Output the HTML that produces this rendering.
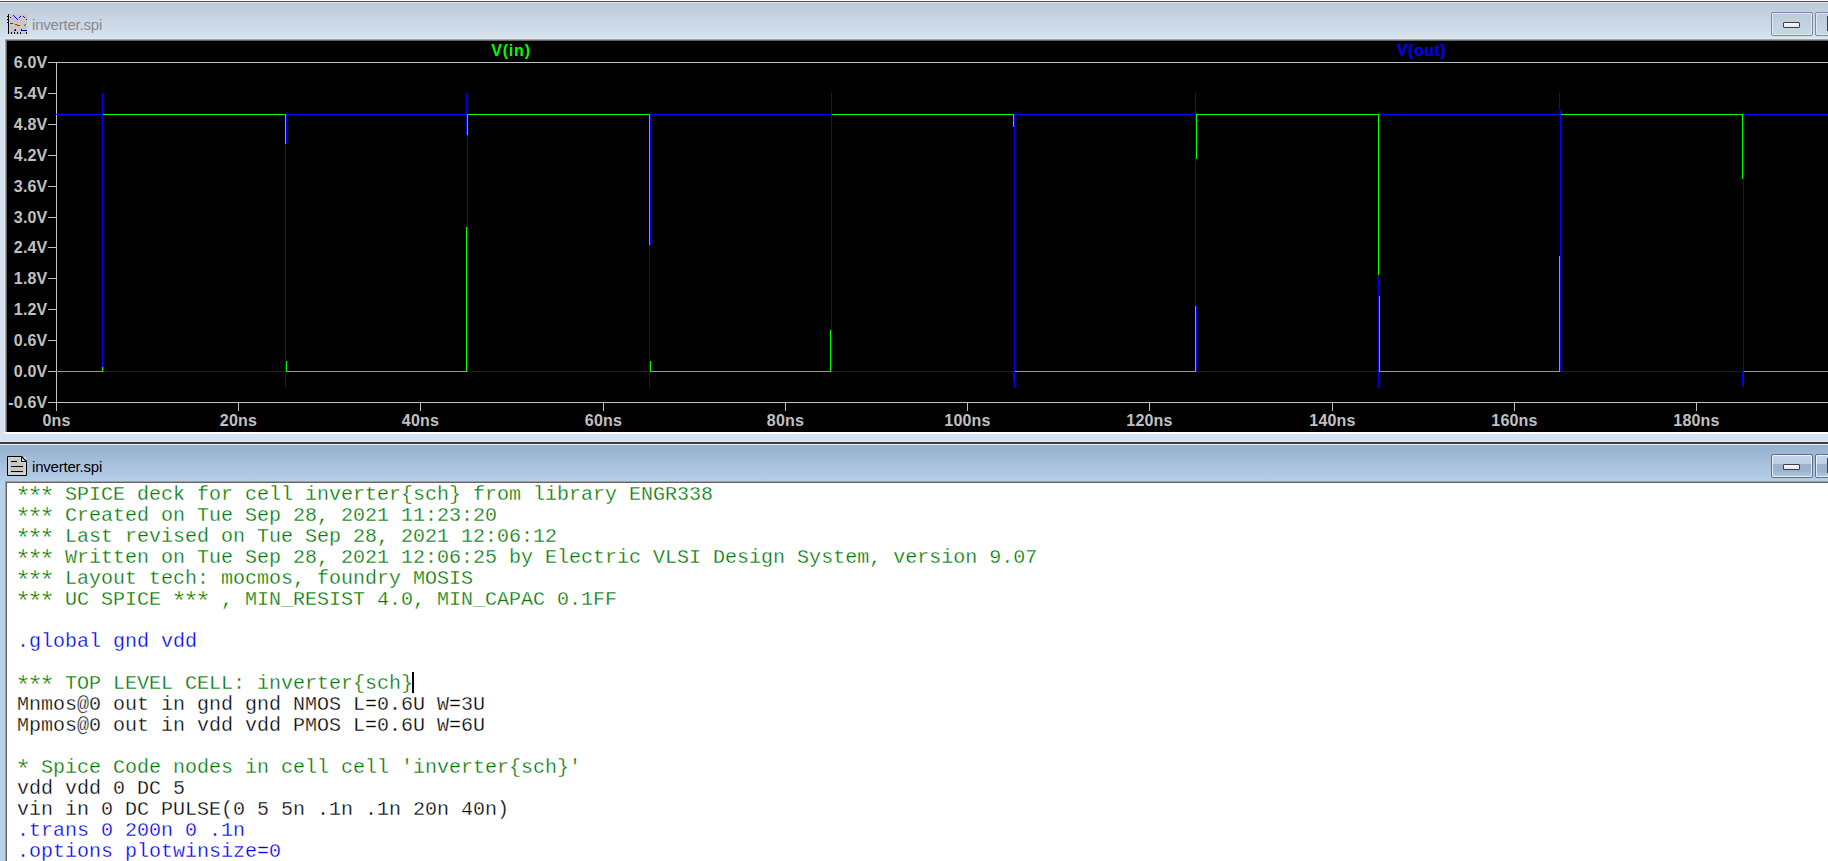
<!DOCTYPE html>
<html><head><meta charset="utf-8"><style>
html,body{margin:0;padding:0;}
body{width:1828px;height:861px;position:relative;overflow:hidden;background:#d6e3ef;font-family:"Liberation Sans",sans-serif;}
.abs{position:absolute;box-sizing:content-box;}
#net{position:absolute;left:17px;top:484px;font-family:"Liberation Mono",monospace;font-size:20px;line-height:21px;white-space:pre;-webkit-text-stroke:0.3px #fff;paint-order:normal;}
.ast{display:inline-block;width:12px;text-align:center;transform:translateY(3px) scale(1.3);}
</style></head><body>
<div class="abs" style="left:0;top:0;width:1828px;height:1px;background:#fff"></div>
<div class="abs" style="left:0;top:1px;width:1828px;height:1px;background:#484848"></div>
<div class="abs" style="left:0;top:2px;width:1828px;height:1px;background:#e6edf5"></div>
<div class="abs" style="left:0;top:3px;width:1828px;height:35px;background:linear-gradient(#bccad8,#d6e2ee)"></div>
<div class="abs" style="left:4px;top:38px;width:1824px;height:1px;background:#e0eaf5"></div>
<div class="abs" style="left:4px;top:38px;width:1px;height:396px;background:#e0eaf5"></div>
<div class="abs" style="left:5px;top:39px;width:1823px;height:1px;background:#a0a0a0"></div>
<div class="abs" style="left:5px;top:39px;width:1px;height:393px;background:#a0a0a0"></div>
<div class="abs" style="left:6px;top:40px;width:1822px;height:1px;background:#646464"></div>
<div class="abs" style="left:6px;top:40px;width:1px;height:392px;background:#646464"></div>
<div class="abs" style="left:7px;top:41px;width:1821px;height:391px;background:#000"></div>
<div class="abs" style="left:5px;top:432px;width:1823px;height:2px;background:#fff"></div>
<div class="abs" style="left:0;top:441px;width:1828px;height:1px;background:#e2eaf3"></div>
<div class="abs" style="left:0;top:442px;width:1828px;height:2px;background:#3a3a3a"></div>
<div class="abs" style="left:0;top:444px;width:1828px;height:1px;background:#eef3f9"></div>
<div class="abs" style="left:0;top:445px;width:1828px;height:36px;background:linear-gradient(#95b1ce,#b6cee8)"></div>
<div class="abs" style="left:0;top:481px;width:5px;height:380px;background:#b9d1ea"></div>
<div class="abs" style="left:5px;top:481px;width:1823px;height:1px;background:#a0a0a0"></div>
<div class="abs" style="left:5px;top:481px;width:1px;height:380px;background:#a0a0a0"></div>
<div class="abs" style="left:6px;top:482px;width:1822px;height:1px;background:#646464"></div>
<div class="abs" style="left:6px;top:482px;width:1px;height:379px;background:#646464"></div>
<div class="abs" style="left:7px;top:483px;width:1821px;height:378px;background:#fff"></div>
<div class="abs" style="left:1771px;top:12px;width:40px;height:22px;border:1px solid #7a8aa8;border-radius:2px;background:linear-gradient(#bccbdb,#c9d7e5);box-shadow:inset 0 0 0 1px rgba(240,245,250,0.65)"></div><div class="abs" style="left:1815px;top:12px;width:40px;height:22px;border:1px solid #7a8aa8;border-radius:2px;background:linear-gradient(#bccbdb,#c9d7e5);box-shadow:inset 0 0 0 1px rgba(240,245,250,0.65)"></div><div class="abs" style="left:1783px;top:22px;width:15px;height:4px;border:1px solid #3c3c50;border-radius:1px;background:linear-gradient(#fafafa,#e6e6e6)"></div>
<div class="abs" style="left:1827px;top:16px;width:3px;height:15px;background:#3c3c50"></div>
<div class="abs" style="left:1771px;top:454px;width:40px;height:22px;border:1px solid #5c6f8c;border-radius:2px;background:linear-gradient(#c4d6ea 0%,#bcd0e6 42%,#98b2cf 43%,#98b2cf 70%,#b2c9e3 100%);box-shadow:inset 0 0 0 1px rgba(255,255,255,0.7)"></div><div class="abs" style="left:1815px;top:454px;width:40px;height:22px;border:1px solid #5c6f8c;border-radius:2px;background:linear-gradient(#c4d6ea 0%,#bcd0e6 42%,#98b2cf 43%,#98b2cf 70%,#b2c9e3 100%);box-shadow:inset 0 0 0 1px rgba(255,255,255,0.7)"></div><div class="abs" style="left:1783px;top:464px;width:15px;height:4px;border:1px solid #3c3c50;border-radius:1px;background:linear-gradient(#fafafa,#e6e6e6)"></div>
<div class="abs" style="left:1827px;top:458px;width:3px;height:15px;background:#3c3c50"></div>
<svg width="1828" height="861" viewBox="0 0 1828 861" style="position:absolute;left:0;top:0" shape-rendering="crispEdges">
<rect x="56" y="62" width="1772" height="1" fill="#c0c0c0"/><rect x="56" y="402" width="1772" height="1" fill="#c0c0c0"/><rect x="56" y="62" width="1" height="349" fill="#c0c0c0"/><rect x="48" y="62" width="8" height="1" fill="#c0c0c0"/><rect x="48" y="93" width="8" height="1" fill="#c0c0c0"/><rect x="48" y="124" width="8" height="1" fill="#c0c0c0"/><rect x="48" y="155" width="8" height="1" fill="#c0c0c0"/><rect x="48" y="186" width="8" height="1" fill="#c0c0c0"/><rect x="48" y="217" width="8" height="1" fill="#c0c0c0"/><rect x="48" y="247" width="8" height="1" fill="#c0c0c0"/><rect x="48" y="278" width="8" height="1" fill="#c0c0c0"/><rect x="48" y="309" width="8" height="1" fill="#c0c0c0"/><rect x="48" y="340" width="8" height="1" fill="#c0c0c0"/><rect x="48" y="371" width="8" height="1" fill="#c0c0c0"/><rect x="48" y="402" width="8" height="1" fill="#c0c0c0"/><rect x="56" y="402" width="1" height="9" fill="#c0c0c0"/><rect x="238" y="402" width="1" height="9" fill="#c0c0c0"/><rect x="420" y="402" width="1" height="9" fill="#c0c0c0"/><rect x="603" y="402" width="1" height="9" fill="#c0c0c0"/><rect x="785" y="402" width="1" height="9" fill="#c0c0c0"/><rect x="967" y="402" width="1" height="9" fill="#c0c0c0"/><rect x="1149" y="402" width="1" height="9" fill="#c0c0c0"/><rect x="1332" y="402" width="1" height="9" fill="#c0c0c0"/><rect x="1514" y="402" width="1" height="9" fill="#c0c0c0"/><rect x="1696" y="402" width="1" height="9" fill="#c0c0c0"/><rect x="56" y="371" width="47" height="1" fill="#00ff00"/><rect x="102" y="114" width="1" height="258" fill="#00ff00"/><rect x="102" y="114" width="184" height="1" fill="#00ff00"/><rect x="285" y="114" width="1" height="247" fill="#00ff00"/><rect x="286" y="361" width="1" height="11" fill="#00ff00"/><rect x="286" y="371" width="181" height="1" fill="#00ff00"/><rect x="467" y="114" width="1" height="113" fill="#00ff00"/><rect x="466" y="227" width="1" height="145" fill="#00ff00"/><rect x="467" y="114" width="183" height="1" fill="#00ff00"/><rect x="649" y="114" width="1" height="247" fill="#00ff00"/><rect x="650" y="361" width="1" height="11" fill="#00ff00"/><rect x="650" y="371" width="181" height="1" fill="#00ff00"/><rect x="831" y="114" width="1" height="216" fill="#00ff00"/><rect x="830" y="330" width="1" height="42" fill="#00ff00"/><rect x="831" y="114" width="183" height="1" fill="#00ff00"/><rect x="1013" y="114" width="1" height="13" fill="#00ff00"/><rect x="1014" y="127" width="1" height="245" fill="#00ff00"/><rect x="1014" y="371" width="182" height="1" fill="#00ff00"/><rect x="1196" y="114" width="1" height="45" fill="#00ff00"/><rect x="1195" y="159" width="1" height="213" fill="#00ff00"/><rect x="1196" y="114" width="183" height="1" fill="#00ff00"/><rect x="1378" y="114" width="1" height="182" fill="#00ff00"/><rect x="1379" y="296" width="1" height="76" fill="#00ff00"/><rect x="1379" y="371" width="181" height="1" fill="#00ff00"/><rect x="1560" y="114" width="1" height="142" fill="#00ff00"/><rect x="1559" y="256" width="1" height="116" fill="#00ff00"/><rect x="1560" y="114" width="183" height="1" fill="#00ff00"/><rect x="1742" y="114" width="1" height="65" fill="#00ff00"/><rect x="1743" y="179" width="1" height="193" fill="#00ff00"/><rect x="1743" y="371" width="85" height="1" fill="#00ff00"/><rect x="56" y="114" width="47" height="1" fill="#0000ff"/><rect x="102" y="93" width="1" height="274" fill="#0000ff"/><rect x="103" y="367" width="1" height="5" fill="#0000ff"/><rect x="103" y="371" width="183" height="1" fill="#0000ff"/><rect x="286" y="114" width="1" height="30" fill="#0000ff"/><rect x="285" y="144" width="1" height="244" fill="#0000ff"/><rect x="286" y="114" width="181" height="1" fill="#0000ff"/><rect x="466" y="93" width="1" height="42" fill="#0000ff"/><rect x="467" y="135" width="1" height="237" fill="#0000ff"/><rect x="467" y="371" width="183" height="1" fill="#0000ff"/><rect x="650" y="114" width="1" height="131" fill="#0000ff"/><rect x="649" y="245" width="1" height="143" fill="#0000ff"/><rect x="650" y="114" width="182" height="1" fill="#0000ff"/><rect x="831" y="93" width="1" height="279" fill="#0000ff"/><rect x="831" y="371" width="183" height="1" fill="#0000ff"/><rect x="1014" y="114" width="1" height="274" fill="#0000ff"/><rect x="1013" y="371" width="1" height="10" fill="#0000ff"/><rect x="1014" y="114" width="182" height="1" fill="#0000ff"/><rect x="1195" y="93" width="1" height="213" fill="#0000ff"/><rect x="1196" y="306" width="1" height="66" fill="#0000ff"/><rect x="1196" y="371" width="183" height="1" fill="#0000ff"/><rect x="1379" y="114" width="1" height="161" fill="#0000ff"/><rect x="1378" y="275" width="1" height="113" fill="#0000ff"/><rect x="1379" y="114" width="181" height="1" fill="#0000ff"/><rect x="1559" y="93" width="1" height="17" fill="#0000ff"/><rect x="1560" y="110" width="1" height="262" fill="#0000ff"/><rect x="1560" y="371" width="183" height="1" fill="#0000ff"/><rect x="1743" y="114" width="1" height="274" fill="#0000ff"/><rect x="1742" y="371" width="1" height="15" fill="#0000ff"/><rect x="1743" y="114" width="85" height="1" fill="#0000ff"/>
<g font-family="Liberation Sans" font-weight="bold" font-size="16" fill="#c0c0c0" letter-spacing="0.2" shape-rendering="auto"><text x="47.5" y="68" text-anchor="end">6.0V</text><text x="47.5" y="99" text-anchor="end">5.4V</text><text x="47.5" y="130" text-anchor="end">4.8V</text><text x="47.5" y="161" text-anchor="end">4.2V</text><text x="47.5" y="192" text-anchor="end">3.6V</text><text x="47.5" y="223" text-anchor="end">3.0V</text><text x="47.5" y="253" text-anchor="end">2.4V</text><text x="47.5" y="284" text-anchor="end">1.8V</text><text x="47.5" y="315" text-anchor="end">1.2V</text><text x="47.5" y="346" text-anchor="end">0.6V</text><text x="47.5" y="377" text-anchor="end">0.0V</text><text x="47.5" y="408" text-anchor="end">-0.6V</text><text x="56.5" y="426" text-anchor="middle">0ns</text><text x="238.5" y="426" text-anchor="middle">20ns</text><text x="420.5" y="426" text-anchor="middle">40ns</text><text x="603.5" y="426" text-anchor="middle">60ns</text><text x="785.5" y="426" text-anchor="middle">80ns</text><text x="967.5" y="426" text-anchor="middle">100ns</text><text x="1149.5" y="426" text-anchor="middle">120ns</text><text x="1332.5" y="426" text-anchor="middle">140ns</text><text x="1514.5" y="426" text-anchor="middle">160ns</text><text x="1696.5" y="426" text-anchor="middle">180ns</text></g>
<text x="511" y="56" text-anchor="middle" font-family="Liberation Sans" font-weight="bold" font-size="16" letter-spacing="0.8" fill="#00ff00">V(in)</text>
<text x="1421.5" y="56" text-anchor="middle" font-family="Liberation Sans" font-weight="bold" font-size="16" letter-spacing="0.5" fill="#0000ff">V(out)</text>
<rect x="9" y="14" width="18" height="20" fill="#c8c8c8"/><rect x="8" y="14" width="1" height="20" fill="#000"/><rect x="7" y="16" width="1" height="1" fill="#000"/><rect x="7" y="19" width="1" height="1" fill="#000"/><rect x="7" y="22" width="1" height="1" fill="#000"/><rect x="11" y="32" width="1" height="2" fill="#000"/><rect x="14" y="32" width="1" height="2" fill="#000"/><rect x="17" y="32" width="1" height="2" fill="#000"/><rect x="20" y="32" width="1" height="2" fill="#000"/><rect x="26" y="32" width="1" height="2" fill="#000"/><rect x="10" y="17" width="1" height="1" fill="#0000ff"/><rect x="13" y="15" width="1" height="1" fill="#0000ff"/><rect x="14" y="16" width="1" height="1" fill="#0000ff"/><rect x="15" y="17" width="1" height="1" fill="#0000ff"/><rect x="16" y="18" width="1" height="1" fill="#0000ff"/><rect x="17" y="19" width="1" height="1" fill="#0000ff"/><rect x="19" y="17" width="1" height="1" fill="#0000ff"/><rect x="20" y="16" width="1" height="1" fill="#0000ff"/><rect x="23" y="16" width="1" height="1" fill="#0000ff"/><rect x="24" y="17" width="1" height="1" fill="#0000ff"/><rect x="26" y="19" width="1" height="1" fill="#0000ff"/><rect x="10" y="23" width="3" height="1" fill="#ff0000"/><rect x="15" y="24" width="2" height="1" fill="#ff0000"/><rect x="17" y="25" width="3" height="1" fill="#ff0000"/><rect x="24" y="25" width="1" height="1" fill="#ff0000"/><rect x="25" y="24" width="1" height="1" fill="#ff0000"/><rect x="15" y="29" width="1" height="1" fill="#000080"/><rect x="14" y="30" width="2" height="1" fill="#000080"/><rect x="21" y="29" width="1" height="1" fill="#000080"/><rect x="21" y="30" width="6" height="1" fill="#000080"/>
<g shape-rendering="auto"><path d="M7.5 456.5 H21.5 L26.5 461.5 V475.5 H7.5 Z" fill="#c8c8c8" stroke="#000" stroke-width="1"/><path d="M9 458 H20.5 V462.5 H25 V474 H9 Z" fill="none" stroke="#dcdcdc" stroke-width="1" /><rect x="21" y="457" width="1" height="5" fill="#000"/><rect x="21" y="461" width="5" height="1" fill="#000"/><rect x="22" y="457" width="4" height="4" fill="#e8e8e8"/><path d="M21.5 456.5 L26.5 461.5" stroke="#000" stroke-width="1.2" fill="none"/><rect x="11" y="461" width="6" height="1" fill="#000"/><rect x="11" y="466" width="12" height="1" fill="#000"/><rect x="11" y="471" width="12" height="1" fill="#000"/></g>
</svg>
<div class="abs" style="left:32px;top:15px;font-size:15px;letter-spacing:-0.2px;color:#8a8a8a;line-height:20px">inverter.spi</div>
<div class="abs" style="left:32px;top:457px;font-size:15px;letter-spacing:-0.2px;color:#000;line-height:20px">inverter.spi</div>
<div id="net"><div style="color:#007800"><span class="ast">*</span><span class="ast">*</span><span class="ast">*</span> SPICE deck for cell inverter{sch} from library ENGR338</div><div style="color:#007800"><span class="ast">*</span><span class="ast">*</span><span class="ast">*</span> Created on Tue Sep 28, 2021 11:23:20</div><div style="color:#007800"><span class="ast">*</span><span class="ast">*</span><span class="ast">*</span> Last revised on Tue Sep 28, 2021 12:06:12</div><div style="color:#007800"><span class="ast">*</span><span class="ast">*</span><span class="ast">*</span> Written on Tue Sep 28, 2021 12:06:25 by Electric VLSI Design System, version 9.07</div><div style="color:#007800"><span class="ast">*</span><span class="ast">*</span><span class="ast">*</span> Layout tech: mocmos, foundry MOSIS</div><div style="color:#007800"><span class="ast">*</span><span class="ast">*</span><span class="ast">*</span> UC SPICE <span class="ast">*</span><span class="ast">*</span><span class="ast">*</span> , MIN_RESIST 4.0, MIN_CAPAC 0.1FF</div><div style="color:#000000">&nbsp;</div><div style="color:#0000f0">.global gnd vdd</div><div style="color:#000000">&nbsp;</div><div style="color:#007800"><span class="ast">*</span><span class="ast">*</span><span class="ast">*</span> TOP LEVEL CELL: inverter{sch}</div><div style="color:#000000">Mnmos@0 out in gnd gnd NMOS L=0.6U W=3U</div><div style="color:#000000">Mpmos@0 out in vdd vdd PMOS L=0.6U W=6U</div><div style="color:#000000">&nbsp;</div><div style="color:#007800"><span class="ast">*</span> Spice Code nodes in cell cell &#x27;inverter{sch}&#x27;</div><div style="color:#000000">vdd vdd 0 DC 5</div><div style="color:#000000">vin in 0 DC PULSE(0 5 5n .1n .1n 20n 40n)</div><div style="color:#0000f0">.trans 0 200n 0 .1n</div><div style="color:#0000f0">.options plotwinsize=0</div></div>
<div class="abs" style="left:412px;top:672px;width:2px;height:21px;background:#000"></div>
</body></html>
